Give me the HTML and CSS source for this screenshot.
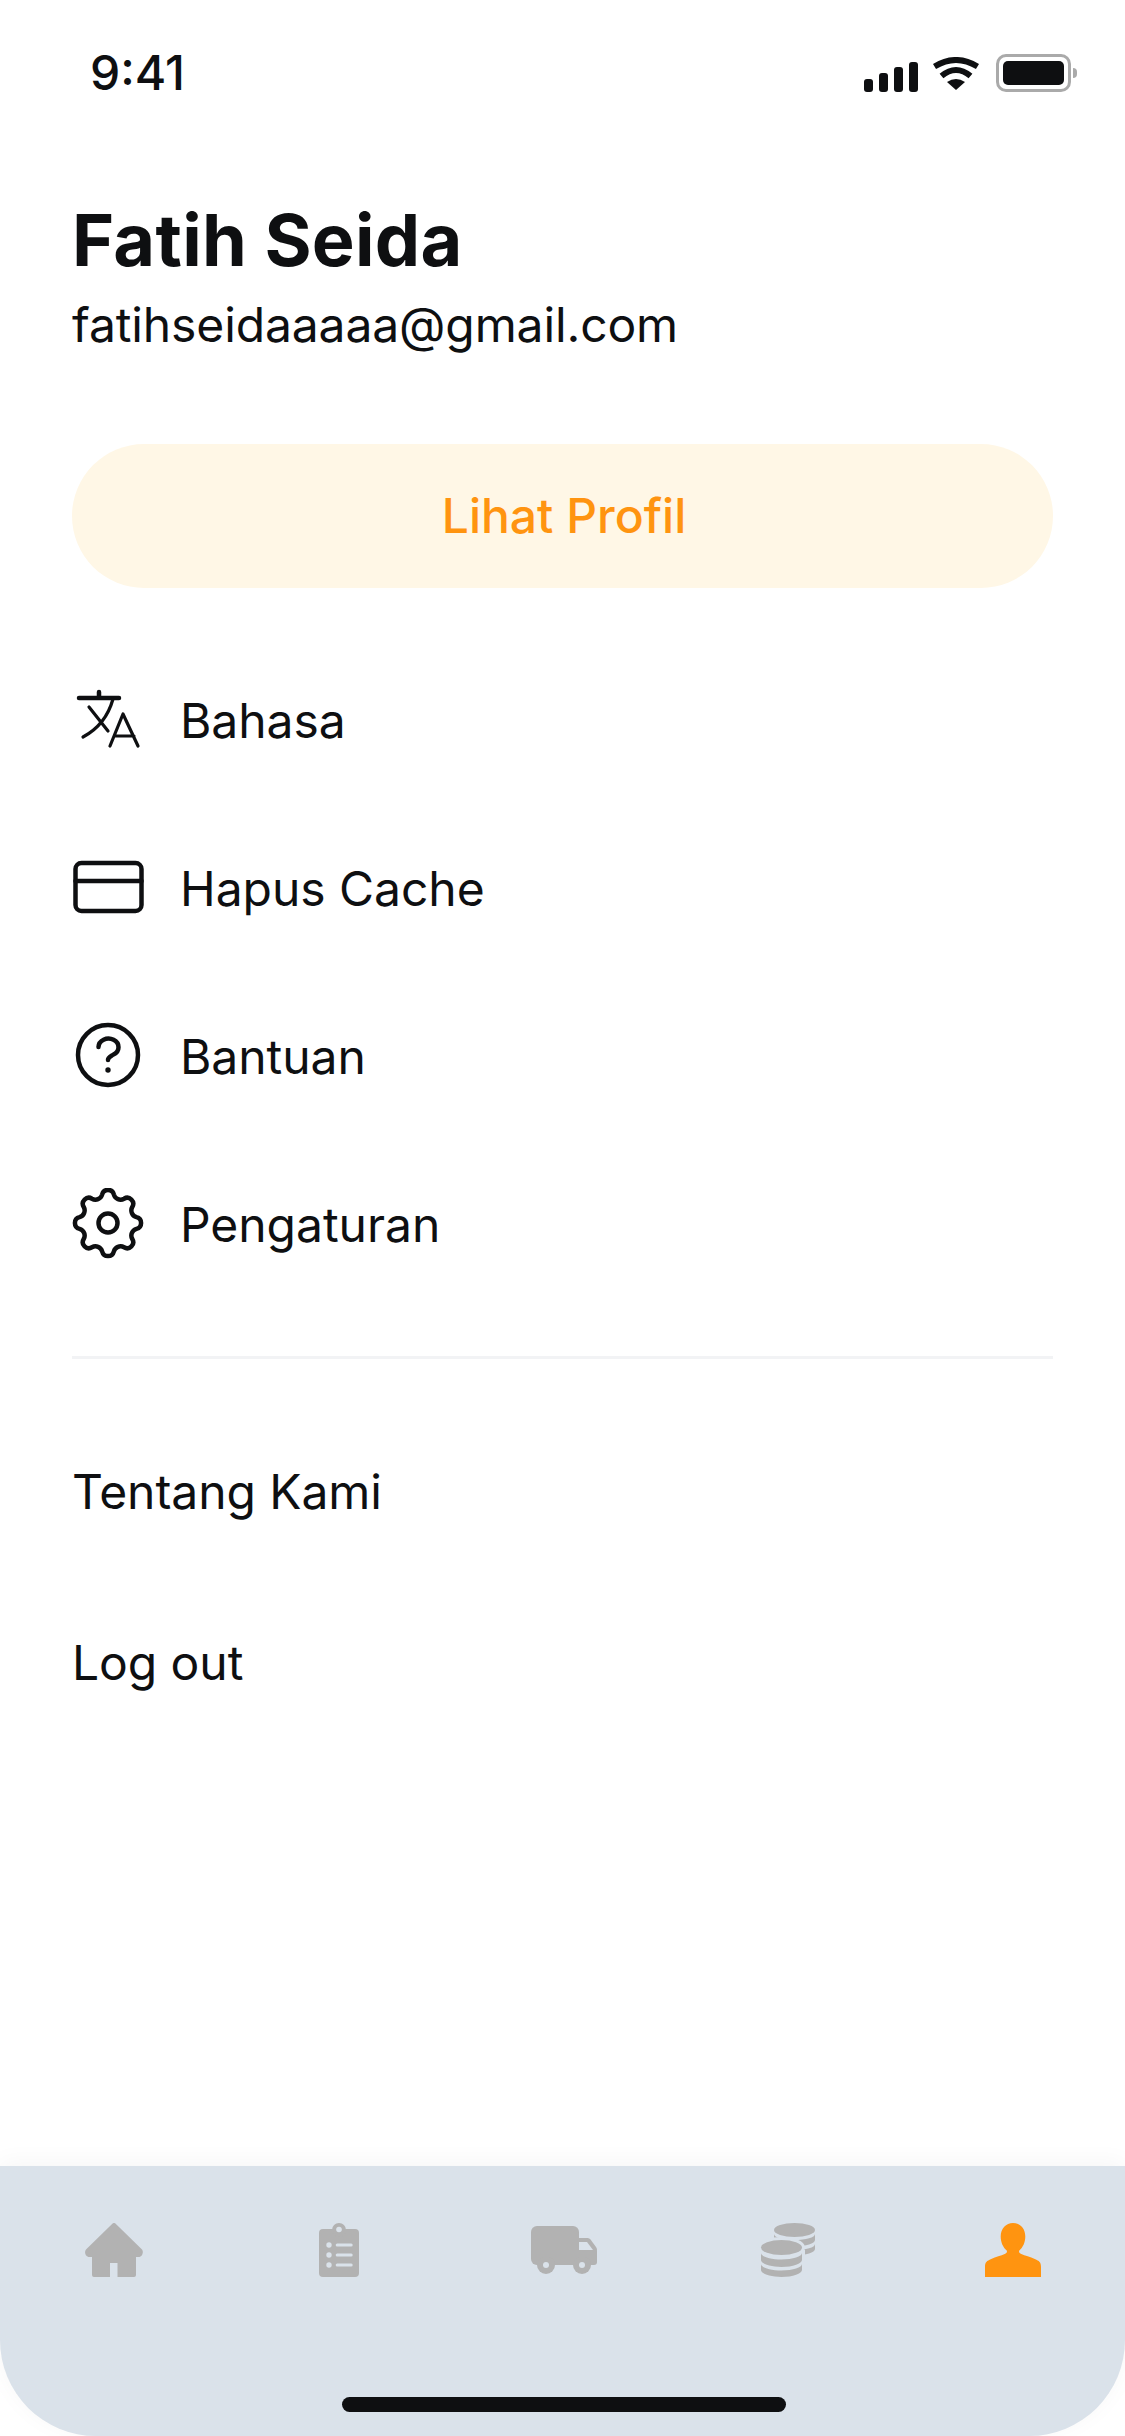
FILE: index.html
```html
<!DOCTYPE html>
<html lang="id">
<head>
<meta charset="utf-8">
<title>Profil</title>
<link rel="stylesheet" href="styles.css">
</head>
<body>
<div class="screen">
  <header class="status">
    <span class="time">9:41</span>
    <div class="status-icons">
      <svg class="sig" width="54" height="30" viewBox="0 0 54 30"><rect y="17" width="9" height="13" rx="3"/><rect x="15" y="11" width="9" height="19" rx="3"/><rect x="30" y="5" width="9" height="25" rx="3"/><rect x="45" width="9" height="30" rx="3"/></svg>
      <svg class="wifi" width="46" height="33" viewBox="0 0 46 33"><path class="wifi-arc" d="M1.500 9.500Q23-3.500 44.500 9.500"/><path class="wifi-arc" d="M8.500 19Q23 7 37.500 19"/><path class="wifi-dot" d="M23 33 14 25Q23 19 32 25Z"/></svg>
      <div class="battery"><div class="battery-fill"></div></div>
      <div class="battery-nub"></div>
    </div>
  </header>
  <main class="main">
    <section class="profile">
      <h1 class="name">Fatih Seida</h1>
      <p class="email">fatihseidaaaaa@gmail.com</p>
      <button class="profile-btn">Lihat Profil</button>
    </section>
    <ul class="menu">
      <li class="menu-row">
        <svg class="ico" width="72" height="72" viewBox="0 0 72 72"><path class="thick" d="M7 14H47M27 8V14"/><path class="thin" d="M41 15C36 33 26 45 11 53M17 23 36 47"/><path class="thin" d="M38 62 51 30 66 62M42 52H62"/></svg>
        <span>Bahasa</span>
      </li>
      <li class="menu-row">
        <svg class="ico" width="72" height="72" viewBox="0 0 72 72"><rect class="thick" x="3.500" y="11" width="66" height="48" rx="6"/><path class="thick" d="M3.500 29H69.500"/></svg>
        <span>Hapus Cache</span>
      </li>
      <li class="menu-row">
        <svg class="ico" width="72" height="72" viewBox="0 0 72 72"><circle class="thick" cx="36" cy="35" r="30"/><path class="thick" d="M26.500 27A10 8.500 0 1 1 41.500 34.500C38.500 36.500 36 37 36 40"/><circle class="dot" cx="36" cy="50" r="2.700"/></svg>
        <span>Bantuan</span>
      </li>
      <li class="menu-row">
        <svg class="ico" width="72" height="72" viewBox="0 0 72 72"><g transform="translate(36 35)"><path class="thick" d="M28.500-5.830A6 6 0 0 1 28.500 5.830A7 7 0 0 0 24.280 16.030A6 6 0 0 1 16.030 24.280A7 7 0 0 0 5.830 28.500A6 6 0 0 1-5.830 28.500A7 7 0 0 0-16.030 24.280A6 6 0 0 1-24.280 16.030A7 7 0 0 0-28.500 5.830A6 6 0 0 1-28.500-5.830A7 7 0 0 0-24.280-16.030A6 6 0 0 1-16.030-24.280A7 7 0 0 0-5.830-28.500A6 6 0 0 1 5.830-28.500A7 7 0 0 0 16.030-24.280A6 6 0 0 1 24.280-16.030A7 7 0 0 0 28.500-5.830Z"/><circle class="thick" r="9.500"/></g></svg>
        <span>Pengaturan</span>
      </li>
    </ul>
    <hr class="divider">
    <ul class="links">
      <li class="link-row">Tentang Kami</li>
      <li class="link-row">Log out</li>
    </ul>
  </main>
  <nav class="tabbar">
    <div class="tabs">
      <div class="tab">
        <svg class="tab-ico" width="72" height="54" viewBox="0 0 72 54"><path d="M34.600.6a2 2 0 0 1 2.800 0L64 26.500c1.800 2 .6 7-2.500 7.500H58V52a2 2 0 0 1-2 2H39.500V40H32V54H16a2 2 0 0 1-2-2V34H10.500C7 33.500 6.200 28.500 8 26.500Z"/></svg>
      </div>
      <div class="tab">
        <svg class="tab-ico" width="72" height="54" viewBox="0 0 72 54"><rect x="16" y="6" width="40" height="48" rx="4"/><circle cx="36" cy="7" r="7"/><circle class="cut" cx="36" cy="6.500" r="2.800"/><circle class="cut" cx="26" cy="22" r="2.700"/><circle class="cut" cx="26" cy="32" r="2.700"/><circle class="cut" cx="26" cy="42" r="2.700"/><rect class="cut" x="32.700" y="20.500" width="17" height="3" rx="1.500"/><rect class="cut" x="32.700" y="30.500" width="17" height="3" rx="1.500"/><rect class="cut" x="32.700" y="40.500" width="17" height="3" rx="1.500"/></svg>
      </div>
      <div class="tab">
        <svg class="tab-ico" width="72" height="54" viewBox="0 0 72 54"><rect x="3" y="3" width="48" height="39" rx="6"/><path d="M50 15H59C60.500 15 61.500 15.500 62.500 16.500L68 24C68.700 25 69 26 69 27.500V39A3 3 0 0 1 66 42H50Z"/><path class="cut" d="M51 19H59L65 27H51Z"/><circle cx="18" cy="42" r="9"/><circle cx="54" cy="42" r="9"/><circle class="cut" cx="18" cy="42" r="3"/><circle class="cut" cx="54" cy="42" r="3"/></svg>
      </div>
      <div class="tab">
        <svg class="tab-ico" width="72" height="54" viewBox="0 0 72 54"><path d="M22 11v6c0 3.500 9 6.500 20.500 6.500S63 20.500 63 17v-6c0 3.500-9 6-20.500 6S22 14.500 22 11Z"/><path d="M22 21v5c0 3.500 9 6.500 20.500 6.500S63 29.500 63 26v-5c0 3.500-9 6-20.500 6S22 24.500 22 21Z"/><ellipse cx="42.500" cy="7" rx="20.500" ry="7"/><ellipse class="halo" cx="29.500" cy="24.500" rx="20.500" ry="7.500"/><path class="halo" d="M9 30v7c0 3.500 9 7 20.500 7S50 40.500 50 37v-7Z"/><ellipse cx="29.500" cy="24.500" rx="20.500" ry="7.500"/><path d="M9 30v7c0 3.500 9 7 20.500 7S50 40.500 50 37v-7c0 3.500-9 6.500-20.500 6.500S9 33.500 9 30Z"/><path d="M9 41v6c0 3.500 9 7 20.500 7S50 50.500 50 47v-6c0 3.500-9 6.500-20.500 6.500S9 44.500 9 41Z"/></svg>
      </div>
      <div class="tab">
        <svg class="tab-ico active" width="72" height="54" viewBox="0 0 72 54"><path d="M36 0c7 0 12.300 5.500 12.300 13.500 0 6-2.500 11-6 14-.8 1.300.2 2.800 2 3.600 3.500 1.600 9 2.700 13.500 4.900 4.500 2 6.200 3 6.200 8V54H8V44c0-5 1.700-6 6.200-8 4.500-2.200 10-3.300 13.500-4.900 1.800-.8 2.800-2.300 2-3.600-3.500-3-6-8-6-14C23.700 5.500 29 0 36 0Z"/></svg>
      </div>
    </div>
    <div class="home-indicator"></div>
  </nav>
</div>
</body>
</html>
```
FILE: styles.css
```css
* { box-sizing: border-box; }
html, body { margin: 0; padding: 0; background: #fff; }
body { font-family: Inter, "Liberation Sans", sans-serif; color: #0e0f11; }
.screen { width: 1125px; height: 2436px; display: flex; flex-direction: column; overflow: hidden; background: #fff; }

.status { height: 146px; flex: none; display: flex; align-items: center; justify-content: space-between; padding: 0 48px 0 90px; }
.time { font-size: 48px; font-weight: 500; line-height: 1; }
.status-icons { display: flex; align-items: flex-end; height: 38px; position: relative; }
.sig { fill: #0e0f11; margin: 0 15px 0 0; }
.wifi { margin: 0 17px 2px 0; }
.wifi-arc { fill: none; stroke: #0e0f11; stroke-width: 6; }
.wifi-dot { fill: #0e0f11; }
.battery { width: 75px; height: 38px; border: 3px solid #aaaaaa; border-radius: 10px; padding: 4px; }
.battery-fill { width: 100%; height: 100%; background: #0e0f11; border-radius: 5px; }
.battery-nub { width: 4px; height: 10px; background: #aaaaaa; border-radius: 0 4px 4px 0; margin: 0 0 14px 2px; }

.main { flex: 1; display: flex; flex-direction: column; }
.profile { padding: 50px 72px 0; }
.name { margin: 0; font-size: 72px; font-weight: 700; line-height: 88px; letter-spacing: 0.3px; }
.email { margin: 11px 0 0; font-size: 48px; font-weight: 400; line-height: 60px; letter-spacing: -0.12px; }
.profile-btn { display: block; width: 981px; height: 144px; margin: 89px 0 0; padding: 0 0 0 3px; border: 0; border-radius: 72px; background: #fff7e6; color: #ff9410; font: 500 48px/1 Inter, "Liberation Sans", sans-serif; }

.menu, .links { list-style: none; margin: 0; padding: 0; }
.menu { margin-top: 48px; }
.menu-row { height: 168px; display: flex; align-items: center; gap: 36px; padding-left: 72px; font-size: 48px; letter-spacing: -0.04px; }
.ico { flex: none; }
.thick { fill: none; stroke: #0e0f11; stroke-width: 4.500; stroke-linecap: round; stroke-linejoin: round; }
.thin { fill: none; stroke: #0e0f11; stroke-width: 3.200; stroke-linecap: round; stroke-linejoin: round; }
.dot { fill: #0e0f11; }

.divider { width: 981px; height: 3px; margin: 48px 0 0 72px; border: 0; background: #f2f3f5; flex: none; }
.links { margin-top: 47px; }
.link-row { height: 171px; display: flex; align-items: center; padding-left: 72px; font-size: 48px; letter-spacing: -0.06px; }

.tabbar { flex: none; height: 270px; background: #dae2ea; border-radius: 0 0 96px 96px; box-shadow: 0 -4px 24px rgba(0, 0, 0, 0.04); display: flex; flex-direction: column; align-items: center; padding-top: 57px; position: relative; }
.tabs { width: 100%; display: flex; justify-content: center; padding-left: 2px; }
.tab { width: 225px; height: 54px; display: flex; justify-content: center; }
.tab-ico { fill: #b2b2b2; }
.tab-ico.active { fill: #ff9410; }
.cut { fill: #dae2ea; }
.halo { stroke: #dae2ea; stroke-width: 6; fill: #dae2ea; }
.home-indicator { width: 444px; height: 15px; margin: 120px 0 0 3px; border-radius: 8px; background: #0e0f11; }
```
